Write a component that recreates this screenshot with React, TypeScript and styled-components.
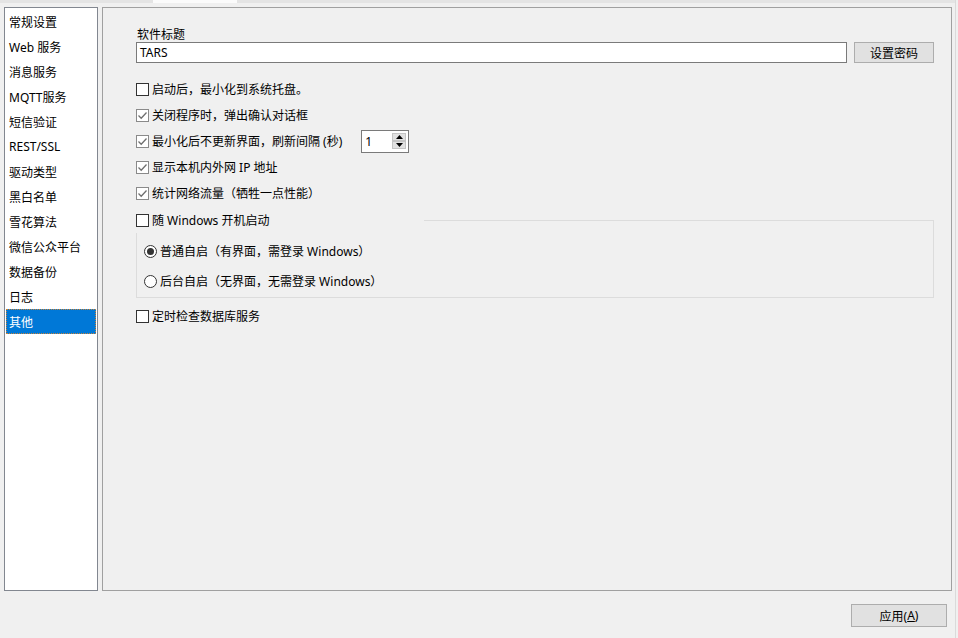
import styled, { createGlobalStyle } from "styled-components"

const GlobalStyle = createGlobalStyle`
    html, body {
        margin: 0;
        padding: 0;
        background: #f0f0f0;
    }
    body {
        font-family: "Noto Sans", "Noto Sans CJK SC", sans-serif;
        font-size: 12px;
        color: #000;
    }
    * { box-sizing: border-box; }
`

const Frame = styled.div`
    width: 956px;
    height: 638px;
    border-right: 1px solid #dadada;
    display: flex;
    flex-direction: column;
`

const TabStrip = styled.div`
    height: 3px;
    display: flex;
`
const TabStub = styled.div<{ $active?: boolean; $w?: number }>`
    width: ${p => (p.$w ? `${p.$w}px` : "auto")};
    flex: ${p => (p.$w ? "none" : "1")};
    background: ${p => (p.$active ? "#fbfbfb" : "#e4e4e4")};
`

const Body = styled.div`
    display: flex;
    gap: 4px;
    padding: 4px 3px 0 4px;
    height: 588px;
`

const NavList = styled.ul`
    list-style: none;
    margin: 0;
    padding: 1px;
    width: 94px;
    background: #fff;
    border: 1px solid #828790;
`
const NavItem = styled.li<{ $selected?: boolean }>`
    height: 25px;
    display: flex;
    align-items: center;
    padding-left: 2px;
    white-space: nowrap;
    background: ${p => (p.$selected ? "#0078d7" : "transparent")};
    color: ${p => (p.$selected ? "#fff" : "#000")};
    border: 1px ${p => (p.$selected ? "dotted #c8843a" : "solid transparent")};
`

const Panel = styled.div`
    flex: 1;
    border: 1px solid #a0a0a0;
    padding: 17px 17px 0 33px;
    display: flex;
    flex-direction: column;
`

const FieldLabel = styled.div`
    height: 17px;
    display: flex;
    align-items: center;
    padding-left: 1px;
`
const TitleRow = styled.div`
    display: flex;
    gap: 7px;
    margin-bottom: 13px;
`
const TextInput = styled.div`
    flex: 1;
    height: 21px;
    background: #fff;
    border: 1px solid #7a7a7a;
    display: flex;
    align-items: center;
    padding-left: 3px;
`
const Button = styled.button<{ $w: number; $h: number }>`
    width: ${p => p.$w}px;
    height: ${p => p.$h}px;
    background: #e1e1e1;
    border: 1px solid #adadad;
    font: inherit;
    color: #000;
    padding: 0;
    display: flex;
    align-items: center;
    justify-content: center;
    flex: none;
`

const Row = styled.label`
    height: 26px;
    display: flex;
    align-items: center;
    gap: 3px;
    white-space: nowrap;
`

const Box = styled.span<{ $checked?: boolean }>`
    width: 13px;
    height: 13px;
    flex: none;
    background: #fff;
    border: 1px solid ${p => (p.$checked ? "#8a8a8a" : "#333")};
    display: flex;
    align-items: center;
    justify-content: center;
`

const Dot = styled.span<{ $checked?: boolean }>`
    width: 13px;
    height: 13px;
    flex: none;
    border-radius: 50%;
    background: #fff;
    border: 1px solid #333;
    display: flex;
    align-items: center;
    justify-content: center;
    &::after {
        content: "";
        width: 7px;
        height: 7px;
        border-radius: 50%;
        background: ${p => (p.$checked ? "#333" : "transparent")};
    }
`

const Spinner = styled.div`
    margin-left: 16px;
    width: 48px;
    height: 23px;
    background: #fff;
    border: 1px solid #7a7a7a;
    display: flex;
    align-items: center;
    justify-content: space-between;
    padding: 0 2px 0 3px;
`
const SpinButtons = styled.div`
    display: flex;
    flex-direction: column;
`
const SpinButton = styled.span`
    width: 14px;
    height: 8px;
    background: #e1e1e1;
    border: 1px solid #c4c4c4;
    display: flex;
    align-items: center;
    justify-content: center;
`

const GroupBox = styled.div`
    margin-top: 14px;
    border: 1px solid #dcdcdc;
    padding: 0 0 3px 7px;
    display: flex;
    flex-direction: column;
    gap: 4px;
`
const GroupHeader = styled(Row)`
    margin: -14px 0 1px -8px;
    width: 288px;
    background: #f0f0f0;
`

const LastRow = styled(Row)`
    margin-top: 5px;
`

const Footer = styled.div`
    flex: 1;
    display: flex;
    justify-content: flex-end;
    align-items: flex-start;
    padding: 13px 8px 0 0;
`

const Mnemonic = styled.span`
    text-decoration: underline;
`

function Check({ checked }: { checked?: boolean }) {
    return (
        <Box $checked={checked}>
            {checked && (
                <svg width="11" height="11" viewBox="0 0 11 11">
                    <path d="M1.5 5.5 L4.2 8.2 L9.5 2.5" fill="none" stroke="#6f6f6f" strokeWidth="1.3" />
                </svg>
            )}
        </Box>
    )
}

const navItems = [
    "常规设置", "Web 服务", "消息服务", "MQTT服务", "短信验证", "REST/SSL",
    "驱动类型", "黑白名单", "雪花算法", "微信公众平台", "数据备份", "日志", "其他",
]

export default function App() {
    return (
        <>
            <GlobalStyle />
            <Frame>
                <TabStrip>
                    <TabStub $w={153} />
                    <TabStub $w={84} $active />
                    <TabStub />
                </TabStrip>
                <Body>
                    <NavList>
                        {navItems.map(item => (
                            <NavItem key={item} $selected={item === "其他"}>{item}</NavItem>
                        ))}
                    </NavList>
                    <Panel>
                        <FieldLabel>软件标题</FieldLabel>
                        <TitleRow>
                            <TextInput>TARS</TextInput>
                            <Button $w={80} $h={21}>设置密码</Button>
                        </TitleRow>
                        <Row><Check />启动后，最小化到系统托盘。</Row>
                        <Row><Check checked />关闭程序时，弹出确认对话框</Row>
                        <Row>
                            <Check checked />最小化后不更新界面，刷新间隔 (秒)
                            <Spinner>
                                <span>1</span>
                                <SpinButtons>
                                    <SpinButton>
                                        <svg width="7" height="4" viewBox="0 0 7 4"><path d="M0 4 L3.5 0 L7 4 Z" fill="#000" /></svg>
                                    </SpinButton>
                                    <SpinButton>
                                        <svg width="7" height="4" viewBox="0 0 7 4"><path d="M0 0 L3.5 4 L7 0 Z" fill="#000" /></svg>
                                    </SpinButton>
                                </SpinButtons>
                            </Spinner>
                        </Row>
                        <Row><Check checked />显示本机内外网 IP 地址</Row>
                        <Row><Check checked />统计网络流量（牺牲一点性能）</Row>
                        <GroupBox>
                            <GroupHeader><Check />随 Windows 开机启动</GroupHeader>
                            <Row><Dot $checked />普通自启（有界面，需登录 Windows）</Row>
                            <Row><Dot />后台自启（无界面，无需登录 Windows）</Row>
                        </GroupBox>
                        <LastRow><Check />定时检查数据库服务</LastRow>
                    </Panel>
                </Body>
                <Footer>
                    <Button $w={96} $h={23}>应用(<Mnemonic>A</Mnemonic>)</Button>
                </Footer>
            </Frame>
        </>
    )
}
